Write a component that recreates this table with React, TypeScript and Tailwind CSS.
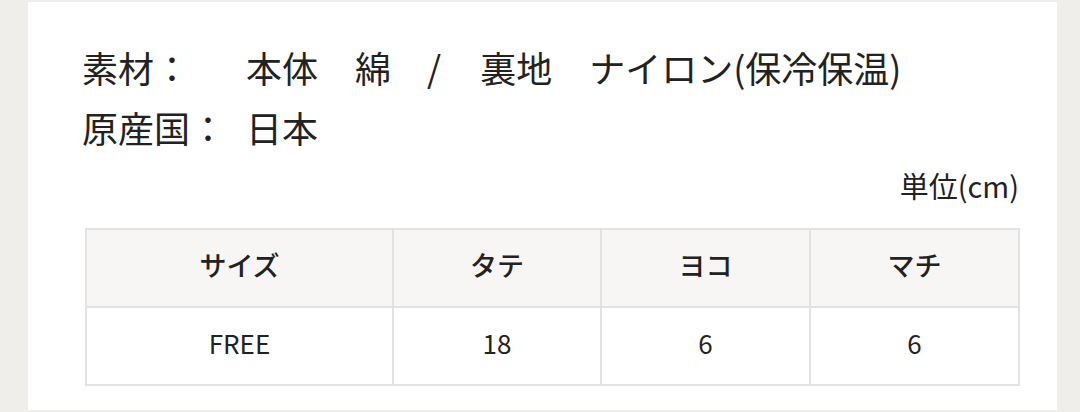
const headers = ['サイズ', 'タテ', 'ヨコ', 'マチ'];
const values = ['FREE', '18', '6', '6'];
const colWidths = ['w-[307px]', 'w-[208px]', 'w-[209px]', 'w-[209px]'];

export default function App() {
  return (
    <div
      className="h-[412px] w-[1080px] bg-[#efeeea] pt-[2px] pb-[2px] pl-[28px] pr-[23px] text-[#222]"
      style={{ fontFamily: '"Noto Sans CJK JP", "Noto Sans", sans-serif' }}
    >
      <div className="h-full bg-white pt-[35px] pl-[54px] pr-[38px]">
        <div className="text-[36px] leading-[60px]">
          <div className="flex">
            <span className="w-[164px] shrink-0">素材：</span>
            <span>本体</span>
            <span className="ml-[37px]">綿</span>
            <span className="ml-[36px]">/</span>
            <span className="ml-[39px]">裏地</span>
            <span className="ml-[37px]">ナイロン(保冷保温)</span>
          </div>
          <div className="flex">
            <span className="w-[164px] shrink-0">原産国：</span>
            <span>日本</span>
          </div>
        </div>

        <div className="mt-[8px] text-right text-[29px] leading-[40px]">単位(cm)</div>

        <table className="mt-[23px] ml-[3px] w-[933px] table-fixed border-collapse border-2 border-[#e2e2e2] text-center text-[26px]">
          <colgroup>
            {colWidths.map((w, i) => (
              <col key={i} className={w} />
            ))}
          </colgroup>
          <thead>
            <tr className="h-[78px] bg-[#f7f6f4]">
              {headers.map(h => (
                <th key={h} className="border-2 border-[#e2e2e2] pb-[6px] text-[27px] font-medium">
                  {h}
                </th>
              ))}
            </tr>
          </thead>
          <tbody>
            <tr className="h-[78px]">
              {values.map((v, i) => (
                <td key={i} className="border-2 border-[#e2e2e2] pb-[8px]">
                  {v}
                </td>
              ))}
            </tr>
          </tbody>
        </table>
      </div>
    </div>
  );
}
